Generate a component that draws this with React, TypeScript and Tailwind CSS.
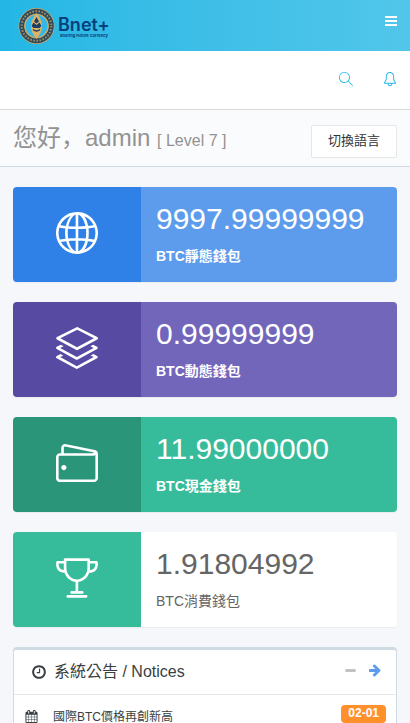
import type { ReactNode } from "react";
import { SlBell, SlGlobe, SlLayers, SlMagnifier, SlTrophy, SlWallet } from "react-icons/sl";

type Wallet = {
  amount: string;
  label: string;
  icon: ReactNode;
  iconClass: string;
  bodyClass: string;
  labelClass: string;
};

const wallets: Wallet[] = [
  {
    amount: "9997.99999999",
    label: "BTC靜態錢包",
    icon: <SlGlobe size={42} />,
    iconClass: "bg-[#2f80e7]",
    bodyClass: "bg-[#5d9cec] text-white",
    labelClass: "font-bold",
  },
  {
    amount: "0.99999999",
    label: "BTC動態錢包",
    icon: <SlLayers size={42} />,
    iconClass: "bg-[#564aa3]",
    bodyClass: "bg-[#7266ba] text-white",
    labelClass: "font-bold",
  },
  {
    amount: "11.99000000",
    label: "BTC現金錢包",
    icon: <SlWallet size={42} />,
    iconClass: "bg-[#2b957a]",
    bodyClass: "bg-[#37bc9b] text-white",
    labelClass: "font-bold",
  },
  {
    amount: "1.91804992",
    label: "BTC消費錢包",
    icon: <SlTrophy size={42} />,
    iconClass: "bg-[#37bc9b]",
    bodyClass: "bg-white text-[#656565]",
    labelClass: "font-normal",
  },
];

function Glyph({ d, className }: { d: string; className: string }) {
  return (
    <svg viewBox="0 0 1792 1792" fill="currentColor" aria-hidden="true" className={className}>
      <path d={d} />
    </svg>
  );
}

const clockPath =
  "M1024 544v448q0 14-9 23t-23 9h-320q-14 0-23-9t-9-23v-64q0-14 9-23t23-9h224v-352q0-14 9-23t23-9h64q14 0 23 9t9 23zm416 352q0-148-73-273t-198-198-273-73-273 73-198 198-73 273 73 273 198 198 273 73 273-73 198-198 73-273zm224 0q0 209-103 385.5t-279.5 279.5-385.5 103-385.5-103-279.5-279.5-103-385.5 103-385.5 279.5-279.5 385.5-103 385.5 103 279.5 279.5 103 385.5z";
const calendarPath =
  "M192 1664h288v-288h-288v288zm352 0h320v-288h-320v288zm-352-352h288v-320h-288v320zm352 0h320v-320h-320v320zm-352-384h288v-288h-288v288zm736 736h320v-288h-320v288zm-384-736h320v-288h-320v288zm768 736h288v-288h-288v288zm-384-352h320v-320h-320v320zm-352-864v-288q0-13-9.5-22.5t-22.5-9.5h-64q-13 0-22.5 9.5t-9.5 22.5v288q0 13 9.5 22.5t22.5 9.5h64q13 0 22.5-9.5t9.5-22.5zm736 864h288v-320h-288v320zm-384-384h320v-288h-320v288zm384 0h288v-288h-288v288zm32-480v-288q0-13-9.5-22.5t-22.5-9.5h-64q-13 0-22.5 9.5t-9.5 22.5v288q0 13 9.5 22.5t22.5 9.5h64q13 0 22.5-9.5t9.5-22.5zm384-64v1280q0 52-38 90t-90 38h-1408q-52 0-90-38t-38-90v-1280q0-52 38-90t90-38h128v-96q0-66 47-113t113-47h64q66 0 113 47t47 113v96h384v-96q0-66 47-113t113-47h64q66 0 113 47t47 113v96h128q52 0 90 38t38 90z";
const arrowPath =
  "M1600 960q0 54-37 91l-651 651q-39 37-91 37-51 0-90-37l-75-75q-38-38-38-91t38-91l293-293h-704q-52 0-84.5-37.5t-32.5-90.5v-128q0-53 32.5-90.5t84.5-37.5h704l-293-294q-38-36-38-90t38-90l75-75q38-38 90-38 53 0 91 38l651 651q37 35 37 90z";

function Logo() {
  return (
    <a href="#" className="flex items-center gap-[3px] font-['Inter',sans-serif] text-[#07407c]">
      <svg width="37" height="38" viewBox="0 0 37 38" aria-hidden="true">
        <circle cx="18.500" cy="19" r="18" fill="#c9ab6a" />
        <circle cx="18.500" cy="19" r="14.800" fill="none" stroke="#2f4a5c" strokeWidth="5" />
        <circle cx="18.500" cy="19" r="14.800" fill="none" stroke="#a88f60" strokeWidth="2" strokeDasharray="1.500 1.600" />
        <circle cx="18.500" cy="19" r="11.500" fill="#2fb9e8" stroke="#c9ab6a" strokeWidth="1.200" />
        <path d="M18.500 6c3 4 5.600 8 5.600 13s-2.600 9-5.600 13c-3-4-5.600-8-5.600-13s2.600-9 5.600-13z" fill="#dfb265" />
        <path d="M18.500 10l2.500 4.500-2.500 2-2.500-2zM13.500 19l2-3.500 3 2.500 3-2.500 2 3.500-2 2h-6z" fill="#1c3f66" />
        <path d="M15 22.500q3.500 3 7 0" fill="none" stroke="#1c3f66" strokeWidth="1.300" />
      </svg>
      <span className="flex flex-col pt-1">
        <span className="text-[18px] leading-[16px] font-semibold">Bnet+</span>
        <span className="pl-[2px] text-[4px] leading-[5px] font-bold">Sharing Future Currency</span>
      </span>
    </a>
  );
}

function WalletCard({ wallet }: { wallet: Wallet }) {
  return (
    <section className="flex h-[95px] overflow-hidden rounded shadow-[0_1px_1px_rgba(0,0,0,0.05)]">
      <div className={`flex w-1/3 items-center justify-center pb-1 text-white ${wallet.iconClass}`}>
        {wallet.icon}
      </div>
      <div className={`flex-1 px-[15px] pt-[14px] ${wallet.bodyClass}`}>
        <p className="text-[30px] leading-[36px]">{wallet.amount}</p>
        <p className={`mt-[9px] text-sm leading-[21px] ${wallet.labelClass}`}>{wallet.label}</p>
      </div>
    </section>
  );
}

export default function App() {
  return (
    <div className="min-h-screen bg-[#f5f7fa] font-['Liberation_Sans','Noto_Sans_CJK_TC',sans-serif] text-[#656565]">
      <header>
        <div className="flex h-[51px] items-center justify-between bg-linear-to-r from-[#23b7e5] to-[#51c6ea] pr-[13px] pl-[18px]">
          <Logo />
          <button type="button" aria-label="Menu" className="mb-[9px] flex w-3 flex-col gap-[2px]">
            <span className="h-[2px] w-full bg-white" />
            <span className="h-[2px] w-full bg-white" />
            <span className="h-[2px] w-full bg-white" />
          </button>
        </div>
        <nav className="flex h-[59px] items-center justify-end gap-[30px] border-b border-[#d5d7d8] bg-white px-[13px] pb-[3px] text-[#23b7e5]">
          <button type="button" aria-label="Search"><SlMagnifier size={14} /></button>
          <button type="button" aria-label="Notifications"><SlBell size={14} /></button>
        </nav>
      </header>

      <div className="flex h-[57px] items-center justify-between border-b border-[#cfdbe2] bg-[#fafbfc] px-[13px]">
        <h1 className="font-['Liberation_Sans','Noto_Sans_CJK_SC',sans-serif] text-2xl text-[#929292]" lang="zh-CN">
          您好，admin <small className="text-base">[ Level 7 ]</small>
        </h1>
        <button type="button" className="mt-[6px] h-[33px] rounded-xs border border-[#e6e8e8] bg-white px-4 text-[13px] text-[#333]">
          切換語言
        </button>
      </div>

      <main className="flex flex-col gap-5 px-[13px] pt-5">
        {wallets.map((wallet) => (
          <WalletCard key={wallet.label} wallet={wallet} />
        ))}

        <section className="rounded border border-t-[3px] border-[#cfdbe2] bg-white">
          <div className="flex h-[45px] items-center border-b border-[#e4eaec] pr-[14px] pl-[17px] text-[#3a3f42]">
            <Glyph d={clockPath} className="size-4" />
            <h2 className="ml-[7px] flex-1 text-base">系統公告 / Notices</h2>
            <button type="button" aria-label="Collapse" className="mr-3 mb-1 h-[3px] w-[11px] rounded-xs bg-[#c1c2c3]" />
            <a href="#" aria-label="All notices" className="mb-1 text-[#5d9cec]">
              <Glyph d={arrowPath} className="size-[14px]" />
            </a>
          </div>
          <div className="flex items-start px-[10px] pt-[10px] text-xs text-[#3a3f42]">
            <Glyph d={calendarPath} className="mx-[1px] mt-[5px] size-[13px]" />
            <a href="#" className="mt-[3px] ml-[14px] flex-1 leading-[18px]">國際BTC價格再創新高</a>
            <time className="rounded bg-[#ff902b] px-[7px] pb-[2px] text-xs leading-[16px] font-bold text-white">02-01</time>
          </div>
        </section>
      </main>
    </div>
  );
}
